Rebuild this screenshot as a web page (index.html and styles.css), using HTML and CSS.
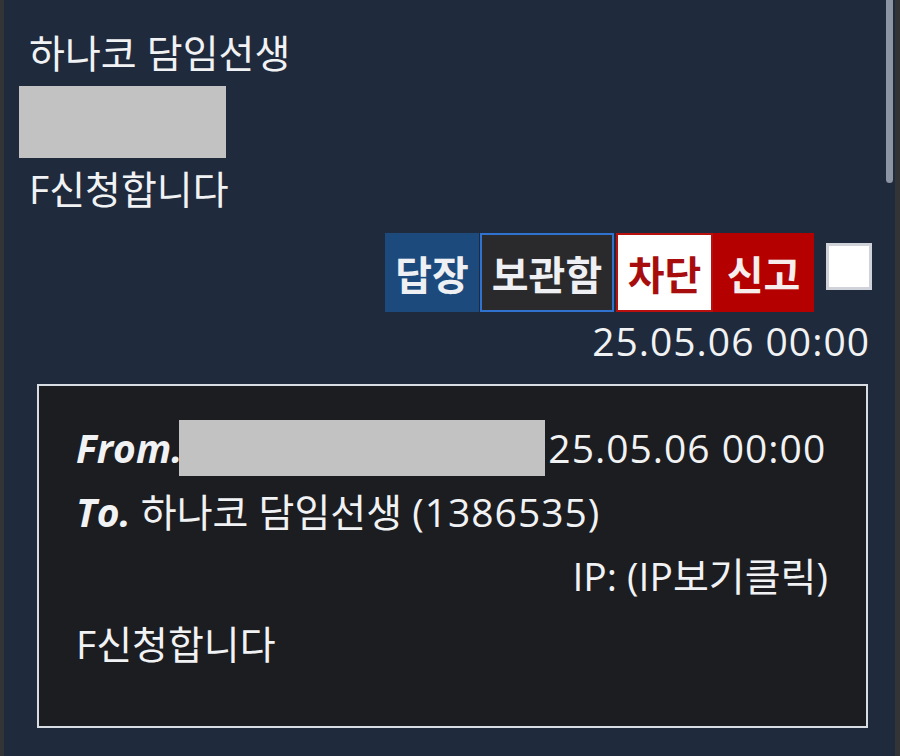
FILE: index.html
```html
<!DOCTYPE html>
<html lang="ko">
<head>
<meta charset="utf-8">
<link rel="stylesheet" href="styles.css">
</head>
<body>
<div class="frame">
  <main class="main">
    <div class="name">하나코 담임선생</div>
    <div class="redact redact-top"></div>
    <div class="msg">F신청합니다</div>
    <div class="actions">
      <span class="btn btn-reply">답장</span>
      <span class="btn btn-keep">보관함</span>
      <span class="btn btn-block">차단</span>
      <span class="btn btn-report">신고</span>
      <span class="check"></span>
    </div>
    <div class="date num">25.05.06 00:00</div>
    <section class="detail">
      <div class="row"><b class="label">From.</b><span class="redact redact-inline"></span><span class="num">25.05.06 00:00</span></div>
      <div class="row"><b class="label">To.</b> 하나코 담임선생 <span class="num">(1386535)</span></div>
      <div class="row ip">IP: (IP보기클릭)</div>
      <div class="row body">F신청합니다</div>
    </section>
  </main>
  <div class="track"><div class="thumb"></div></div>
</div>
</body>
</html>
```
FILE: styles.css
```css
html, body {
  margin: 0;
  padding: 0;
  background: #1f2a3c;
}
body {
  width: 900px;
  height: 756px;
  overflow: hidden;
  font-family: "Open Sans", "Noto Sans CJK KR", sans-serif;
  color: #f1f2f4;
}
.frame {
  display: flex;
  height: 756px;
  border-left: 4px solid #333436;
  border-right: 5px solid #333436;
  box-sizing: border-box;
}
.main {
  flex: 1;
  padding: 28px 14px 0 15px;
  min-width: 0;
}
.track {
  width: 9px;
}
.thumb {
  width: 7px;
  height: 183px;
  background: #8b95a3;
  border-radius: 0 0 4px 4px;
}
.name, .msg {
  font-size: 39px;
  line-height: 50px;
  margin-left: 10px;
}
.num {
  letter-spacing: 1px;
}
.redact {
  background: #c2c2c2;
}
.redact-top {
  width: 207px;
  height: 72px;
  margin-top: 8px;
}
.msg {
  margin-top: 6px;
}
.actions {
  display: flex;
  justify-content: flex-end;
  align-items: center;
  margin-top: 19px;
}
.btn {
  display: flex;
  align-items: center;
  justify-content: center;
  height: 79px;
  box-sizing: border-box;
  font-size: 40px;
  font-weight: 700;
  padding: 0 6px;
  color: #eef0f3;
}
.btn-reply {
  width: 94px;
  background: #1c4a7d;
}
.btn-keep {
  width: 134px;
  margin-left: 1px;
  background: #2a2a2c;
  border: 2px solid #2f72cf;
}
.btn-block {
  width: 97px;
  margin-left: 2px;
  background: #ffffff;
  border: 2px solid #b80f0f;
  color: #a80d0d;
}
.btn-report {
  width: 101px;
  background: #b50000;
  color: #f6eded;
}
.check {
  width: 46px;
  height: 47px;
  box-sizing: border-box;
  background: #ffffff;
  border: 3px solid #cfd2d8;
  margin-left: 12px;
  margin-top: -12px;
}
.date {
  text-align: right;
  font-size: 39px;
  line-height: 50px;
  margin-right: 2px;
  margin-top: 4px;
}
.detail {
  margin: 18px 4px 0 18px;
  background: #1c1d21;
  border: 2px solid #d8dce3;
  padding: 30px 38px 50px 37px;
}
.row {
  font-size: 39px;
  line-height: 64px;
  display: flex;
  align-items: center;
  white-space: pre;
}
.label {
  font-family: "Open Sans", "Noto Sans", sans-serif;
  font-style: italic;
  font-weight: 700;
  letter-spacing: 0;
}
.redact-inline {
  width: 366px;
  height: 56px;
  margin-left: -3px;
  margin-right: 3px;
}
.ip {
  justify-content: flex-end;
}
.body {
  margin-top: 4px;
}
```
